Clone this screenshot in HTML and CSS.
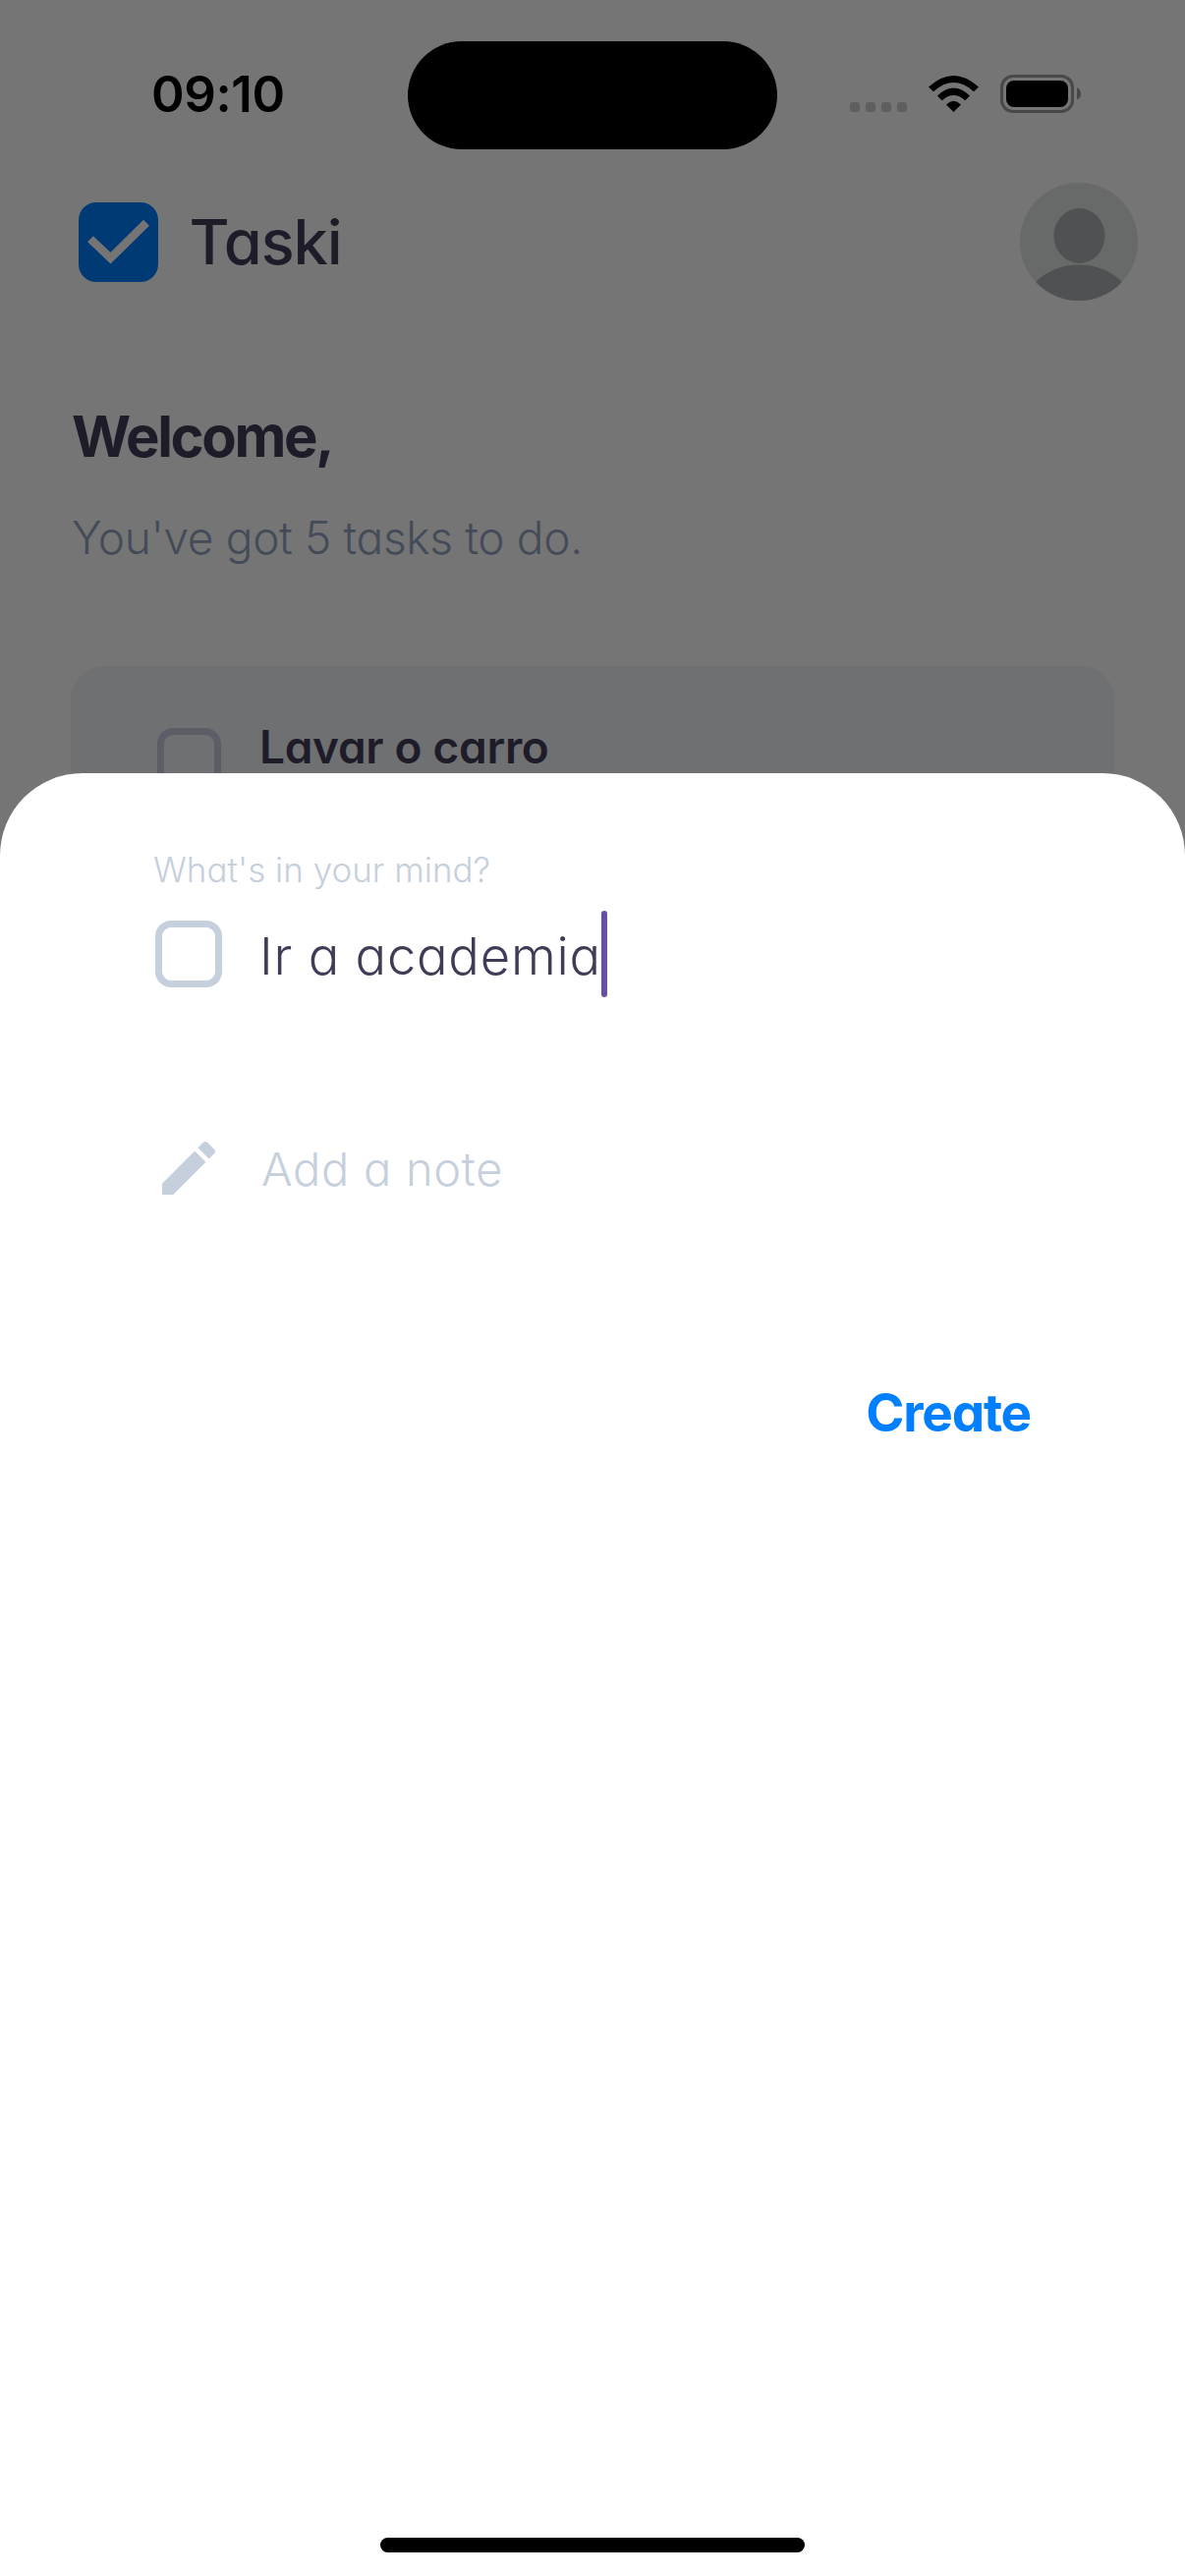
FILE: index.html
```html
<!DOCTYPE html>
<html lang="en">
<head>
<meta charset="utf-8">
<title>Taski</title>
<link rel="stylesheet" href="styles.css">
</head>
<body>
<div class="screen">
  <header class="status">
    <span class="clock">09:10</span>
    <span class="island"></span>
    <span class="indicators">
      <span class="dots"><i></i><i></i><i></i><i></i></span>
      <svg class="wifi" viewBox="0 0 51 37">
        <path d="M0 11.5Q25.5-11.5 51 11.5L46 16.2Q25.5-2 5 16.2Z"/>
        <path d="M9 20.5Q25.500 4.500 42 20.500L37.300 25.300Q25.500 14.500 13.700 25.300Z"/>
        <path d="M18 29.400Q25.500 22 33 29.400L25.500 37Z"/>
      </svg>
      <svg class="battery" viewBox="0 0 82 39">
        <rect x="1.5" y="1.500" width="72" height="36" rx="11.500" fill="none" stroke="#484848" stroke-width="3"/>
        <rect x="6" y="6" width="63" height="27" rx="8"/>
        <path d="M78 13Q82 15 82 19.500T78 25.500Z" fill="#484848"/>
      </svg>
    </span>
  </header>

  <div class="brand-row">
    <svg class="logo" viewBox="0 0 81 81">
      <rect width="81" height="81" rx="18" fill="#003a75"/>
      <path d="M12 37.200L32.500 56.700L69 20.700" fill="none" stroke="#757575" stroke-width="8.400"/>
    </svg>
    <span class="brand">Taski</span>
    <svg class="avatar" viewBox="0 0 120 120">
      <defs><clipPath id="round"><circle cx="60" cy="60" r="60"/></clipPath></defs>
      <circle cx="60" cy="60" r="60" fill="#686a69"/>
      <g clip-path="url(#round)" fill="#4e5252">
        <ellipse cx="60.500" cy="54" rx="26" ry="28"/>
        <path d="M16 101Q34 83.500 60 83.500T104 101V120H16Z"/>
      </g>
    </svg>
  </div>

  <h1 class="welcome">Welcome,</h1>
  <p class="summary">You've got 5 tasks to do.</p>

  <div class="card">
    <span class="box box-dim"></span>
    <span class="task">Lavar o carro</span>
  </div>

  <section class="sheet">
    <div class="label">What's in your mind?</div>
    <div class="field">
      <span class="box"></span>
      <span class="title">Ir a academia</span><span class="caret"></span>
    </div>
    <div class="note">
      <svg class="pencil" viewBox="0 0 24 24"><path d="M3 17.250V21h3.750L17.810 9.940l-3.750-3.750L3 17.250zM20.710 7.040c.39-.39.39-1.020 0-1.410l-2.340-2.340c-.39-.39-1.020-.39-1.410 0l-1.830 1.830 3.750 3.750 1.830-1.830z"/></svg>
      <span class="hint">Add a note</span>
    </div>
    <div class="actions"><span class="create">Create</span></div>
    <div class="home"></div>
  </section>
</div>
</body>
</html>
```
FILE: styles.css
```css
* { box-sizing: border-box; }
body { margin: 0; background: #757575; }
.screen {
  position: relative;
  width: 1206px;
  height: 2622px;
  overflow: hidden;
  background: #757575;
  font-family: Inter, "Liberation Sans", sans-serif;
  font-feature-settings: "cv11";
  white-space: nowrap;
}
.status { display: flex; height: 186px; padding-top: 42px; }
.clock {
  width: 415px;
  padding-left: 154px;
  font-size: 51px;
  font-weight: 600;
  line-height: 108px;
  letter-spacing: -0.4px;
}
.island { width: 376px; height: 110px; border-radius: 55px; background: #000; }
.indicators { display: flex; padding: 34px 0 0 74px; height: 75px; }
.dots { display: flex; gap: 6px; width: 80px; padding-top: 28px; }
.dots i { width: 10px; height: 10px; border-radius: 3px; background: #5e5e5e; }
.wifi { width: 51px; height: 37px; margin: 1px 22px 0 0; }
.battery { width: 82px; height: 39px; }

.brand-row { display: flex; align-items: center; height: 120px; padding: 0 48px 0 79.500px; }
.logo { width: 81px; height: 81px; }
.brand { margin: -1px 0 0 32px; font-size: 63px; font-weight: 500; line-height: 80px; letter-spacing: -1px; color: #1f1c29; }
.avatar { width: 120px; height: 120px; margin-left: auto; }

.welcome { margin: 104px 0 0 73px; font-size: 58px; font-weight: 650; line-height: 68px; letter-spacing: -2.350px; color: #1f1c29; }
.summary { margin: 39px 0 0 73px; font-size: 46px; font-weight: 300; line-height: 60px; letter-spacing: -0.340px; color: #444b58; }

.card {
  display: flex;
  height: 200px;
  margin: 101px 72px 0;
  padding: 63px 0 0 88px;
  border-radius: 34px;
  background: #6f7072;
}
.box { flex: none; width: 68px; height: 68px; border: 7.500px solid #c6cfdc; border-radius: 16px; }
.box-dim { width: 65px; height: 66px; border-color: #5b5e66; }
.task { margin: -4px 0 0 39px; font-size: 46px; font-weight: 600; line-height: 46px; letter-spacing: -0.300px; color: #1f1c29; }

.sheet {
  position: absolute;
  left: 0;
  right: 0;
  bottom: 0;
  height: 1835.500px;
  display: flex;
  flex-direction: column;
  padding: 76px 156px 24px;
  border-radius: 84px 84px 0 0;
  background: #fff;
}
.label { height: 64px; font-size: 35px; font-weight: 300; line-height: 44px; color: #c6cfdc; }
.field { display: flex; align-items: center; height: 90px; padding-left: 2px; }
.field .box { margin-top: -1px; }
.title { margin: 2px 0 0 38px; font-size: 52.500px; font-weight: 340; line-height: 90px; letter-spacing: 0.750px; color: #3f3d56; }
.caret { width: 6px; height: 88px; margin-top: -1px; border-radius: 3px; background: #6750a4; }
.note { display: flex; align-items: center; height: 72px; margin-top: 136px; }
.pencil { width: 72px; height: 72px; fill: #c6cfdc; }
.hint { margin: 2px 0 0 38px; font-size: 47px; font-weight: 320; line-height: 72px; letter-spacing: 0.700px; color: #c6cfdc; }
.actions { display: flex; justify-content: flex-end; margin-top: 173px; }
.create { margin-right: 1px; font-size: 53px; font-weight: 680; line-height: 80px; letter-spacing: -1.200px; color: #007fff; }
.home { width: 432px; height: 15px; margin: auto auto 0; border-radius: 8px; background: #000; }
```
